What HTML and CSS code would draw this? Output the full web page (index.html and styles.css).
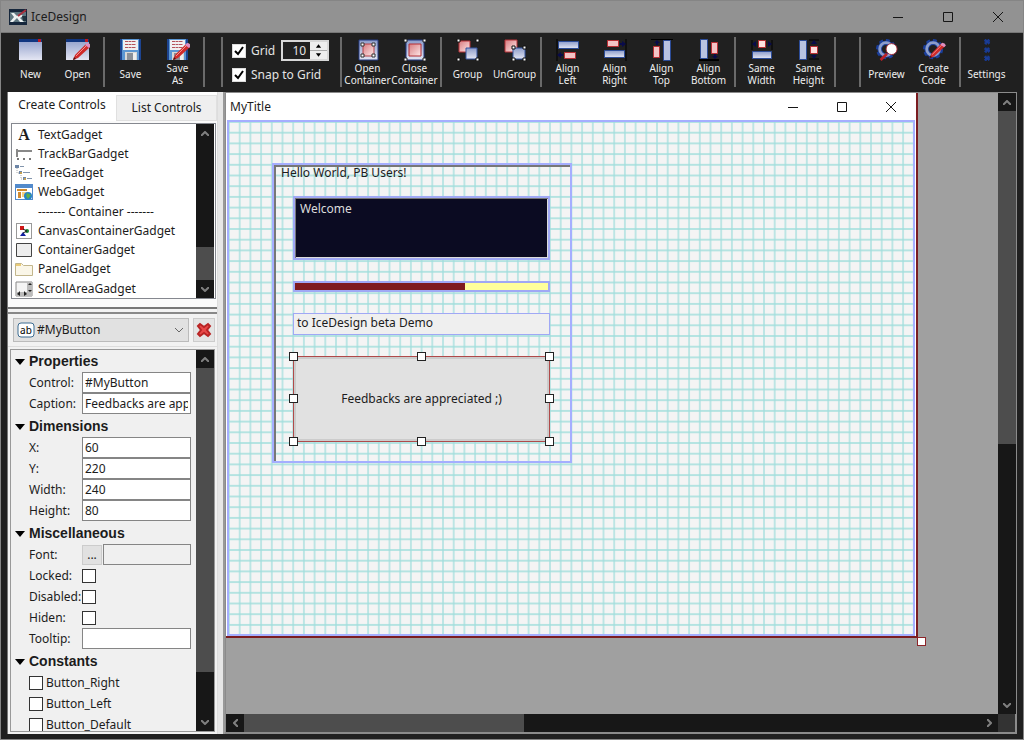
FILE: index.html
```html
<!DOCTYPE html>
<html lang="en">
<head>
<meta charset="utf-8">
<title>IceDesign</title>
<link rel="stylesheet" href="styles.css">
</head>
<body>
<svg class="defs" aria-hidden="true">
  <defs>
    <linearGradient id="blue" x1="0" y1="0" x2="0" y2="1"><stop offset="0" stop-color="#8d9cc9"/><stop offset="1" stop-color="#e4e6f3"/></linearGradient>
    <linearGradient id="red" x1="0" y1="0" x2="1" y2="1"><stop offset="0" stop-color="#d77c80"/><stop offset="1" stop-color="#ffe9e9"/></linearGradient>
    <g id="page"><rect x="0" y="0" width="23" height="21" fill="url(#blue)"/><path d="M0 0h23v3H0z" fill="#10357f"/><path d="M19 0h3v3h-3z" fill="#c01820"/></g>
    <g id="disk"><path d="M1 0h21v21H1z" fill="#5b96d3"/><path d="M1 0h2v21H1zM20 0h2v21h-2z" fill="#1d4490"/><path d="M4 1h15v10H4z" fill="#f1eff0"/><path d="M6 2.500h11M6 5.500h11M6 8.500h11" stroke="#b5525a" stroke-dasharray="3 .5"/><path d="M6 13h12v8H6z" fill="#d7d7d7"/><path d="M8 14h6v7H8z" fill="#8a8f98"/><path d="M14 14h3v7h-3z" fill="#eee"/></g>
    <g id="pencil"><path d="M7 21l2-5L20 5l4 3L12 19z" fill="#cf2b2b"/><path d="M10 17L21 6" stroke="#f59090"/><path d="M19 6l2-2q3 0 4 3l-2 2z" fill="#df8fc0"/><path d="M7 21l1-3 2 2z" fill="#501010"/></g>
    <g id="gear"><circle cx="11" cy="11" r="9" fill="none" stroke="#1b3f9c" stroke-width="4" stroke-dasharray="4 3"/><circle cx="11" cy="11" r="7" fill="none" stroke="#1b3f9c" stroke-width="5"/><circle cx="11" cy="11" r="7" fill="none" stroke="#8c9dcb" stroke-width="3"/></g>
  </defs>
</svg>
<div class="app">
  <header class="titlebar">
    <svg class="logo" viewBox="0 0 18 16"><path d="M0 0h18v16H0z" fill="#16273c"/><path d="M1 3h16v10H1z" fill="#5f7780"/><path d="M2 4h3l3 3 3-2 3 2-3 2 4 4h-4L8 9l-4 4H1l4-5z" fill="#edf2f2"/><path d="M13 7h4v5h-3z" fill="#21343f"/><path d="M9 7l8-6" stroke="#a82e3b" stroke-width="2"/></svg>
    <h1 class="apptitle">IceDesign</h1>
    <div class="winbtns">
      <button class="winbtn" aria-label="Minimize"><svg viewBox="0 0 12 12"><path d="M1 6.5h10"/></svg></button>
      <button class="winbtn" aria-label="Maximize"><svg viewBox="0 0 12 12"><path d="M1.500 1.500h9v9h-9z"/></svg></button>
      <button class="winbtn" aria-label="Close"><svg viewBox="0 0 12 12"><path d="M1 1l10 10M11 1L1 11"/></svg></button>
    </div>
  </header>

  <nav class="toolbar">
    <button class="tool"><svg viewBox="0 0 24 22"><use href="#page"/></svg><span>New</span></button>
    <button class="tool"><svg viewBox="0 0 24 22"><use href="#page"/><use href="#pencil"/></svg><span>Open</span></button>
    <i class="sep"></i>
    <button class="tool"><svg viewBox="0 0 24 22"><use href="#disk"/></svg><span>Save</span></button>
    <button class="tool"><svg viewBox="0 0 24 22"><use href="#disk"/><use href="#pencil"/></svg><span>Save<br>As</span></button>
    <i class="sep"></i>
    <i class="sep apart"></i>
    <div class="gridopts">
      <label class="dark"><input type="checkbox" class="check lit" checked><span>Grid</span></label>
      <span class="spin"><input type="text" value="10" aria-label="Grid size"><span class="arrows"><button aria-label="Increase"><svg viewBox="0 0 8 4"><path d="M1 4l3-4 3 4z"/></svg></button><button aria-label="Decrease"><svg viewBox="0 0 8 4"><path d="M1 0l3 4 3-4z"/></svg></button></span></span>
      <label class="dark snap"><input type="checkbox" class="check lit" checked><span>Snap to Grid</span></label>
    </div>
    <i class="sep"></i>
    <button class="tool"><svg viewBox="0 0 24 22"><path d="M3 1h19v20H3z" fill="url(#blue)" stroke="#243b83"/><path d="M7 5h11v12H7z" fill="url(#red)" stroke="#b54249"/><g fill="#fff" stroke="#333"><path d="M5 4h3v3H5zM16 4h3v3h-3zM5 15h3v3H5zM16 15h3v3h-3z"/></g></svg><span>Open<br>Container</span></button>
    <button class="tool"><svg viewBox="0 0 24 22"><path d="M3 1h18v20H3z" fill="url(#blue)" stroke="#243b83"/><path d="M6 5h12v12H6z" fill="url(#red)" stroke="#b52e35"/><g fill="#fff" stroke="#222"><path d="M1 0h3v3H1zM20 0h3v3h-3zM1 19h3v3H1zM20 19h3v3h-3z"/></g></svg><span>Close<br>Container</span></button>
    <i class="sep"></i>
    <button class="tool"><svg viewBox="0 0 24 22"><path d="M3 2h11v11H3z" fill="url(#red)" stroke="#b63238"/><path d="M10 9h11v11H10z" fill="url(#blue)" stroke="#3555a0"/><g fill="#fff" stroke="#111"><path d="M1 0h3v3H1zM20 0h3v3h-3zM1 19h3v3H1zM20 19h3v3h-3z"/></g></svg><span>Group</span></button>
    <button class="tool"><svg viewBox="0 0 24 22"><path d="M2 1h12v12H2z" fill="url(#red)" stroke="#b63238"/><path d="M10 9h12v11H10z" fill="url(#blue)" stroke="#3555a0"/><g fill="#fff" stroke="#111"><path d="M9 7h3v3H9zM20 7h3v3h-3zM9 19h3v3H9zM20 19h3v3h-3z"/></g></svg><span>UnGroup</span></button>
    <i class="sep"></i>
    <button class="tool"><svg viewBox="0 0 24 22"><path d="M1 0v22" stroke="#000"/><path d="M2.500 2.500h20v7h-20z" fill="url(#blue)" stroke="#2c4c98"/><path d="M8.500 13.500h11v6h-11z" fill="#f3c3c5" stroke="#b92e34"/><path d="M1 16l4-3v2h2v2H5v2z" fill="#090b4a"/></svg><span>Align<br>Left</span></button>
    <button class="tool"><svg viewBox="0 0 24 22"><path d="M23 0v22" stroke="#000"/><path d="M1.500 11.500h20v7h-20z" fill="url(#blue)" stroke="#2c4c98"/><path d="M4.500 1.500h11v6h-11z" fill="#f3c3c5" stroke="#b92e34"/><path d="M23 5l-4-3v2h-2v2h2v2z" fill="#090b4a"/></svg><span>Align<br>Right</span></button>
    <button class="tool"><svg viewBox="0 0 24 22"><path d="M1 0h22" stroke="#000" stroke-width="2"/><path d="M13.500 1.500h7v20h-7z" fill="#b8c3e0" stroke="#2c4c98"/><path d="M3.500 7.500h6v11h-6z" fill="#f3c3c5" stroke="#b92e34"/><path d="M7 1l3 3H8v2H6V4H4z" fill="#090b4a"/></svg><span>Align<br>Top</span></button>
    <button class="tool"><svg viewBox="0 0 24 22"><path d="M2 21h20" stroke="#000" stroke-width="2"/><path d="M3.500 .5h7v19h-7z" fill="#b8c3e0" stroke="#2c4c98"/><path d="M14.500 3.500h6v11h-6z" fill="#f3c3c5" stroke="#b92e34"/><path d="M18 20l3-3h-2v-2h-2v2h-2z" fill="#090b4a"/></svg><span>Align<br>Bottom</span></button>
    <i class="sep"></i>
    <button class="tool"><svg viewBox="0 0 24 22"><path d="M2 1v10M22 1v10" stroke="#000"/><path d="M2.500 12.500h19v7h-19z" fill="url(#blue)" stroke="#2c4c98"/><path d="M8.500 1.500h7v7h-7z" fill="#ffe0e0" stroke="#b92e34"/><path d="M2 5l4-3v6zM22 5l-4-3v6z" fill="#090b4a"/></svg><span>Same<br>Width</span></button>
    <button class="tool"><svg viewBox="0 0 24 22"><path d="M12 1h10M12 20h10" stroke="#000"/><path d="M2.500 1.500h7v19h-7z" fill="#b8c3e0" stroke="#2c4c98"/><path d="M13.500 7.500h7v7h-7z" fill="#ffe0e0" stroke="#b92e34"/><path d="M17 1l3 4h-6zM17 20l3-4h-6z" fill="#090b4a"/></svg><span>Same<br>Height</span></button>
    <i class="sep"></i>
    <i class="sep far"></i>
    <button class="tool"><svg viewBox="0 0 24 24"><use href="#gear"/><path d="M12 16l-7 7" stroke="#b92028" stroke-width="3"/><circle cx="17" cy="11" r="6" fill="#fff" stroke="#a32631"/></svg><span>Preview</span></button>
    <button class="tool"><svg viewBox="0 0 24 24"><use href="#gear"/><use href="#pencil"/></svg><span>Create<br>Code</span></button>
    <i class="sep"></i>
    <button class="tool"><svg viewBox="0 0 24 24"><g fill="#2145a0" stroke="#183a94" stroke-width="3" stroke-dasharray="2 1"><circle cx="12" cy="3" r="2"/><circle cx="12" cy="12" r="2"/><circle cx="12" cy="21" r="2"/></g></svg><span>Settings</span></button>
  </nav>

  <main class="work">
    <aside class="side">
      <section class="palette">
        <div class="tabs" role="tablist">
          <button class="tab on" role="tab" aria-selected="true">Create Controls</button>
          <button class="tab" role="tab" aria-selected="false">List Controls</button>
        </div>
        <div class="listbox">
          <ul class="gadgets">
            <li><span class="ico letter">A</span>TextGadget</li>
            <li><svg class="ico" viewBox="0 0 18 16"><path d="M1 5h16M2 3v8" stroke="#888" stroke-width="2"/><path d="M2 13h2M8 13h2M14 13h2" stroke="#777" stroke-width="2"/></svg>TrackBarGadget</li>
            <li><svg class="ico" viewBox="0 0 18 16"><path d="M2 3v5h4M6 8v6h3" fill="none" stroke="#aaa" stroke-dasharray="1 1"/><path d="M0 0h4v3H0zM4 6h3v3H4zM8 12h3v3H8z" fill="#6d86a7"/><path d="M5 1.500h4M8 7.500h7M12 13.500h5" stroke="#8295ac"/><path d="M5 7h2v2H5zM9 13h2v2H9z" fill="#c2a055"/></svg>TreeGadget</li>
            <li><svg class="ico" viewBox="0 0 18 16"><path d="M0 0h18v16H0z" fill="#528acb"/><path d="M1 4h16v11H1z" fill="#fff"/><path d="M2 5h10v2H2zM3 8h3v6H3z" fill="#d08b31"/><path d="M7 8h5v5H7z" fill="#f6cf7e"/><circle cx="13" cy="12" r="4" fill="#2682c5"/><path d="M12 9l4 2-3 4-2-3z" fill="#60ad4b"/></svg>WebGadget</li>
            <li><span class="ico"></span>------- Container -------</li>
            <li><svg class="ico" viewBox="0 0 18 16"><path d="M1.500 .5h15v15h-15z" fill="#fff" stroke="#333" stroke-dasharray="1 1"/><path d="M5 3h4v4H5z" fill="#d01818"/><circle cx="12" cy="8" r="2" fill="#168436"/><path d="M5 13l3-4 3 4z" fill="#1020a0"/><path d="M8 6l4 2-4 2" fill="none" stroke="#222"/></svg>CanvasContainerGadget</li>
            <li><svg class="ico" viewBox="0 0 18 16"><path d="M1.500 1.500h15v13h-15z" fill="#eee" stroke="#444"/></svg>ContainerGadget</li>
            <li><svg class="ico" viewBox="0 0 18 16"><path d="M.5 2.500h6l2 2h9v10H.5z" fill="#faf6e8" stroke="#c2b68c"/><path d="M1 3h5v2H1z" fill="#eacb78"/></svg>PanelGadget</li>
            <li><svg class="ico" viewBox="0 0 18 16"><path d="M1 1h16v14H1z" fill="#f4f4f4" stroke="#888"/><path d="M12 1h5v14H1v-4h11z" fill="#bbb"/><path d="M13 4l2-2 2 2zM13 9l2 2 2-2zM5 10v5l-3-2zM9 10v5l3-2z" fill="#222"/></svg>ScrollAreaGadget</li>
          </ul>
          <div class="vbar"><button class="arrow" aria-label="Scroll up"><svg viewBox="0 0 8 5"><path d="M0 5l4-4 4 4"/></svg></button><div class="track"><div class="thumb t1"></div></div><button class="arrow" aria-label="Scroll down"><svg viewBox="0 0 8 5"><path d="M0 0l4 4 4-4"/></svg></button></div>
        </div>
      </section>

      <section class="inspector">
        <div class="picker">
          <div class="combo">
            <svg class="ab" viewBox="0 0 18 16"><rect x="1" y="1" width="16" height="14" rx="3" fill="#fff" stroke="#3c6c92"/><text x="9" y="12" text-anchor="middle">ab</text></svg>
            <select aria-label="Selected gadget"><option>#MyButton</option></select>
            <svg class="chev" viewBox="0 0 10 6"><path d="M1 1l4 4 4-4"/></svg>
          </div>
          <button class="del" aria-label="Delete gadget"><svg viewBox="0 0 16 16"><path d="M2 4l2-2 4 3 4-3 2 2-3 4 3 4-2 2-4-3-4 3-2-2 3-4z" fill="#e84848" stroke="#b82424" stroke-width="2"/></svg></button>
        </div>
        <div class="propbox">
          <div class="props">
            <section>
              <h2><svg viewBox="0 0 10 6"><path d="M0 0h10L5 6z"/></svg>Properties</h2>
              <div class="row"><label for="p1">Control:</label><input id="p1" type="text" value="#MyButton"></div>
              <div class="row"><label for="p2">Caption:</label><input id="p2" type="text" value="Feedbacks are appreciated ;)"></div>
            </section>
            <section>
              <h2><svg viewBox="0 0 10 6"><path d="M0 0h10L5 6z"/></svg>Dimensions</h2>
              <div class="row"><label for="p3">X:</label><input id="p3" type="text" value="60"></div>
              <div class="row"><label for="p4">Y:</label><input id="p4" type="text" value="220"></div>
              <div class="row"><label for="p5">Width:</label><input id="p5" type="text" value="240"></div>
              <div class="row"><label for="p6">Height:</label><input id="p6" type="text" value="80"></div>
            </section>
            <section>
              <h2><svg viewBox="0 0 10 6"><path d="M0 0h10L5 6z"/></svg>Miscellaneous</h2>
              <div class="row"><label for="p7">Font:</label><button class="dots" aria-label="Choose font">...</button><input id="p7" class="off" type="text" readonly></div>
              <div class="row"><label for="p8">Locked:</label><input id="p8" class="check" type="checkbox"></div>
              <div class="row"><label for="p9">Disabled:</label><input id="p9" class="check" type="checkbox"></div>
              <div class="row"><label for="p10">Hiden:</label><input id="p10" class="check" type="checkbox"></div>
              <div class="row"><label for="p11">Tooltip:</label><input id="p11" type="text"></div>
            </section>
            <section>
              <h2><svg viewBox="0 0 10 6"><path d="M0 0h10L5 6z"/></svg>Constants</h2>
              <label class="row const"><input class="check" type="checkbox">Button_Right</label>
              <label class="row const"><input class="check" type="checkbox">Button_Left</label>
              <label class="row const"><input class="check" type="checkbox">Button_Default</label>
            </section>
          </div>
          <div class="vbar"><button class="arrow" aria-label="Scroll up"><svg viewBox="0 0 8 5"><path d="M0 5l4-4 4 4"/></svg></button><div class="track"><div class="thumb t2"></div></div><button class="arrow" aria-label="Scroll down"><svg viewBox="0 0 8 5"><path d="M0 0l4 4 4-4"/></svg></button></div>
        </div>
      </section>
    </aside>

    <section class="stage">
      <div class="viewport">
        <div class="form">
          <div class="formtitle"><span>MyTitle</span>
            <svg viewBox="0 0 12 12"><path d="M1 6.500h10"/></svg>
            <svg viewBox="0 0 12 12"><path d="M1.500 1.500h9v9h-9z"/></svg>
            <svg viewBox="0 0 12 12"><path d="M1 1l10 10M11 1L1 11"/></svg>
          </div>
          <div class="canvas">
            <svg class="lines" aria-hidden="true"><defs><pattern id="cells" width="10" height="10" patternUnits="userSpaceOnUse" patternTransform="scale(1.07)"><path d="M10 0v10M0 10h10M0 0v10M0 0h10" fill="none" stroke="#a0dedc" stroke-width="1.2"/></pattern></defs><rect width="100%" height="100%" fill="url(#cells)"/></svg>
            <fieldset class="frame"><legend>Hello World, PB Users!</legend></fieldset>
            <div class="gadget editor">Welcome</div>
            <div class="gadget progress" role="progressbar" aria-label="Progress" aria-valuenow="67"><div style="width:67%"></div></div>
            <div class="gadget text">to IceDesign beta Demo</div>
            <button class="bigbtn">Feedbacks are appreciated ;)
              <i class="h n w"></i><i class="h n c"></i><i class="h n e"></i><i class="h m w"></i><i class="h m e"></i><i class="h s w"></i><i class="h s c"></i><i class="h s e"></i>
            </button>
          </div>
          <i class="resize"></i>
        </div>
      </div>
      <div class="vbar"><button class="arrow" aria-label="Scroll up"><svg viewBox="0 0 8 5"><path d="M0 5l4-4 4 4"/></svg></button><div class="track"><div class="thumb t3"></div></div><button class="arrow" aria-label="Scroll down"><svg viewBox="0 0 8 5"><path d="M0 0l4 4 4-4"/></svg></button></div>
      <div class="hbar"><button class="arrow" aria-label="Scroll left"><svg viewBox="0 0 5 8"><path d="M5 0L1 4l4 4"/></svg></button><div class="track"><div class="thumb t4"></div></div><button class="arrow" aria-label="Scroll right"><svg viewBox="0 0 5 8"><path d="M0 0l4 4-4 4"/></svg></button></div>
      <div class="corner"></div>
    </section>
  </main>
</div>
</body>
</html>
```
FILE: styles.css
```css
* { box-sizing: border-box; }
body { margin: 0; font: 12px/16px "Noto Sans", "Open Sans", sans-serif; color: #1c1c1c; background: #202020; }
button, input, select { font: inherit; color: inherit; margin: 0; padding: 0; border: 0; border-radius: 0; background: none; }
svg { display: block; flex: none; }
.defs { position: absolute; width: 0; height: 0; }
.app { display: flex; flex-direction: column; height: 100vh; border: 1px solid #858585; overflow: hidden; }

.titlebar { flex: none; height: 32px; display: flex; align-items: center; padding-left: 8px; background: #929292; border-bottom: 1px solid #777; }
.logo { width: 18px; height: 16px; }
.apptitle { margin: 0 auto 0 4px; font-size: 12px; font-weight: 400; }
.winbtns { display: flex; }
.winbtn { width: 50px; height: 31px; display: flex; align-items: center; justify-content: center; }
.winbtn svg, .formtitle svg { width: 12px; height: 12px; fill: none; stroke: #161616; }

.toolbar { flex: none; height: 59px; display: flex; padding: 4px 0 3px 6px; background: #202020; overflow: hidden; }
.tool { flex: none; width: 47px; display: flex; flex-direction: column; align-items: center; padding-top: 2px; color: #eee; font-size: 10px; line-height: 12px; text-align: center; }
.tool svg { width: 24px; height: 22px; margin-bottom: 1px; }
.tool span { height: 24px; display: flex; align-items: center; white-space: nowrap; }
.sep { flex: none; width: 2px; margin: 0 2px; background: #6a6a6a; height: 50px; }
.apart { margin-left: 14px; }
.far { margin-left: 21px; }
.gridopts { flex: none; width: 113px; padding: 3px 0 0 7px; display: grid; grid-template-columns: auto 1fr; grid-template-rows: 21px 21px; row-gap: 3px; column-gap: 6px; align-items: center; }
.dark { display: flex; align-items: center; gap: 5px; color: #e4e4e4; white-space: nowrap; }
.snap { grid-column: 1 / 3; }
.spin { display: flex; width: 48px; height: 21px; border: 2px solid #d8d8d8; }
.spin input { width: 27px; text-align: right; padding-right: 4px; color: #e4e4e4; background: #202020; }
.arrows { flex: 1; display: flex; flex-direction: column; gap: 1px; background: #aaa; }
.arrows button { flex: 1; display: flex; align-items: center; justify-content: center; background: #eee; }
.arrows svg { width: 7px; height: 4px; }
.check { appearance: none; flex: none; width: 14px; height: 14px; background: #fff; border: 1px solid #333; }
.lit:checked { background: #fff url("data:image/svg+xml,%3Csvg xmlns='http://www.w3.org/2000/svg' viewBox='0 0 12 12'%3E%3Cpath d='M2 6l3 3 5-7' fill='none' stroke='%23000' stroke-width='2'/%3E%3C/svg%3E"); border-color: #ddd; }

.work { flex: 1; min-height: 0; display: flex; padding: 0 6px 5px 6px; }
.side { flex: none; width: 211px; display: flex; flex-direction: column; gap: 3px; background: #f2f2f2; border-left: 1px solid #777; border-right: 1px solid #ddd; }
.palette { flex: none; display: flex; flex-direction: column; background: #fafafa; border-bottom: 2px solid #777; padding-bottom: 8px; }
.tabs { display: flex; align-items: flex-end; background: #fff; }
.tab { flex: 1; height: 26px; background: #efefef; border: 1px solid #e0e0e0; white-space: nowrap; }
.tab.on { flex: none; width: 108px; height: 29px; padding-bottom: 4px; background: #fff; border: 0; }
.listbox { height: 176px; margin: 2px 1px 0 3px; padding-right: 1px; display: flex; border: 1px solid #85888f; background: #fff; }
.gadgets { flex: 1; margin: 0; padding: 1px 0 0 3px; list-style: none; display: flex; flex-direction: column; justify-content: space-between; }
.gadgets li { height: 19px; display: flex; align-items: center; gap: 5px; white-space: nowrap; }
.ico { width: 18px; height: 16px; }
.letter { font: bold 16px/16px "Liberation Serif", serif; text-align: center; }

.vbar { flex: none; width: 18px; display: flex; flex-direction: column; background: #171717; }
.hbar { height: 18px; display: flex; background: #171717; }
.arrow { flex: none; width: 18px; height: 18px; display: flex; align-items: center; justify-content: center; }
.arrow svg { width: 8px; height: 5px; fill: none; stroke: #808080; stroke-width: 2; }
.hbar .arrow svg { width: 5px; height: 8px; }
.track { flex: 1; display: flex; flex-direction: column; min-height: 0; }
.hbar .track { flex-direction: row; }
.thumb { background: #4d4d4d; }
.t1 { height: 24%; margin-top: auto; }
.t2 { height: 88%; }
.t3 { height: 57%; }
.t4 { width: 38%; }

.inspector { flex: 1; min-height: 0; display: flex; flex-direction: column; background: #f2f2f2; border-top: 2px solid #888; }
.picker { display: flex; gap: 4px; padding: 4px 2px 4px 5px; border-bottom: 1px solid #ddd; }
.combo { flex: 1; height: 24px; display: flex; align-items: center; padding: 0 4px 0 3px; background: #e1e1e1; border: 1px solid #bbb; }
.combo select { flex: 1; min-width: 0; padding-left: 2px; appearance: none; }
.ab { width: 18px; height: 16px; }
.ab text { font-size: 10px; }
.chev { width: 10px; height: 6px; fill: none; stroke: #666; }
.del { width: 22px; height: 24px; display: flex; align-items: center; justify-content: center; background: #e4e4e4; border: 1px solid #ccc; }
.del svg { width: 16px; height: 16px; }
.propbox { flex: 1; min-height: 0; margin: 2px 2px 2px 2px; display: flex; border: 1px solid #999; background: #f0f0f0; overflow: hidden; }
.props { flex: 1; min-width: 0; padding: 1px 5px 0 4px; overflow: hidden; }
.props section + section { margin-top: 2px; }
.props h2 { margin: 0; height: 21px; display: flex; align-items: center; gap: 4px; font: bold 14px/21px "Liberation Sans", sans-serif; }
.props h2 svg { width: 10px; height: 6px; }
.row { height: 21px; display: flex; align-items: center; padding-left: 14px; }
.row > label { flex: none; width: 53px; white-space: nowrap; }
.row input[type="text"] { flex: 1; min-width: 0; height: 21px; padding: 0 2px; background: #fff; border: 1px solid #858585; }
.row input.off { background: #f0f0f0; }
.dots { width: 20px; height: 20px; margin-right: 1px; background: #e1e1e1; border: 1px solid #ccc; }
.const { gap: 3px; }

.stage { flex: 1; min-width: 0; margin-left: 7px; display: grid; grid-template-columns: 1fr 17px; grid-template-rows: 1fr 18px; border: 2px solid #8b8b8b; border-top-width: 1px; border-left-width: 1px; }
.side + .stage { box-shadow: -2px 0 0 #999, -7px 0 0 #e6e6e6; }
.viewport { min-width: 0; min-height: 0; background: #a0a0a0; overflow: hidden; }
.corner { background: #333; }
.form { position: relative; width: 692px; border: solid #7b1c20; border-width: 0 2px 2px 0; background: #fff; }
.formtitle { height: 27px; display: flex; align-items: center; gap: 37px; padding: 0 19px 0 4px; }
.formtitle span { margin-right: auto; }
.canvas { position: relative; height: 516px; margin: 0 1px 0 1px; border: 2px solid #a5aeff; background: #f4f4f4; }
.lines { position: absolute; inset: 0; width: 100%; height: 100%; }
.frame { position: absolute; left: 43px; top: 41px; width: 300px; height: 300px; margin: 0; padding: 0; border: 2px solid #a5aeff; box-shadow: inset 2px 2px 0 #777; }
.frame legend { position: absolute; left: 7px; top: 0; padding: 0; white-space: nowrap; }
.gadget { position: absolute; left: 64px; width: 257px; border: 1px solid #a0a8f5; }
.editor { top: 74px; height: 64px; padding: 3px 5px; background: #0b0b22; color: #dcdcdc; border-width: 2px; box-shadow: inset 1px 1px 0 #777, inset -1px -1px 0 #ddd; }
.progress { top: 159px; height: 11px; border-width: 2px; background: #ffff9b; }
.progress div { height: 100%; background: #7f1b1e; }
.text { top: 191px; height: 22px; padding: 1px 3px; background: #efefef; }
.bigbtn { position: absolute; left: 64px; top: 234px; width: 257px; height: 86px; background: #e1e1e1; border: 1px solid #b04a4a; box-shadow: inset 0 0 0 2px #ccc; }
.h { position: absolute; width: 9px; height: 9px; background: #fff; border: 1px solid #222; }
.n { top: -5px; } .m { top: 37px; } .s { bottom: -5px; }
.w { left: -5px; } .c { left: 123px; } .e { right: -5px; }
.resize { position: absolute; right: -10px; bottom: -10px; width: 9px; height: 9px; background: #fff; border: 1px solid #8c2428; }
```
